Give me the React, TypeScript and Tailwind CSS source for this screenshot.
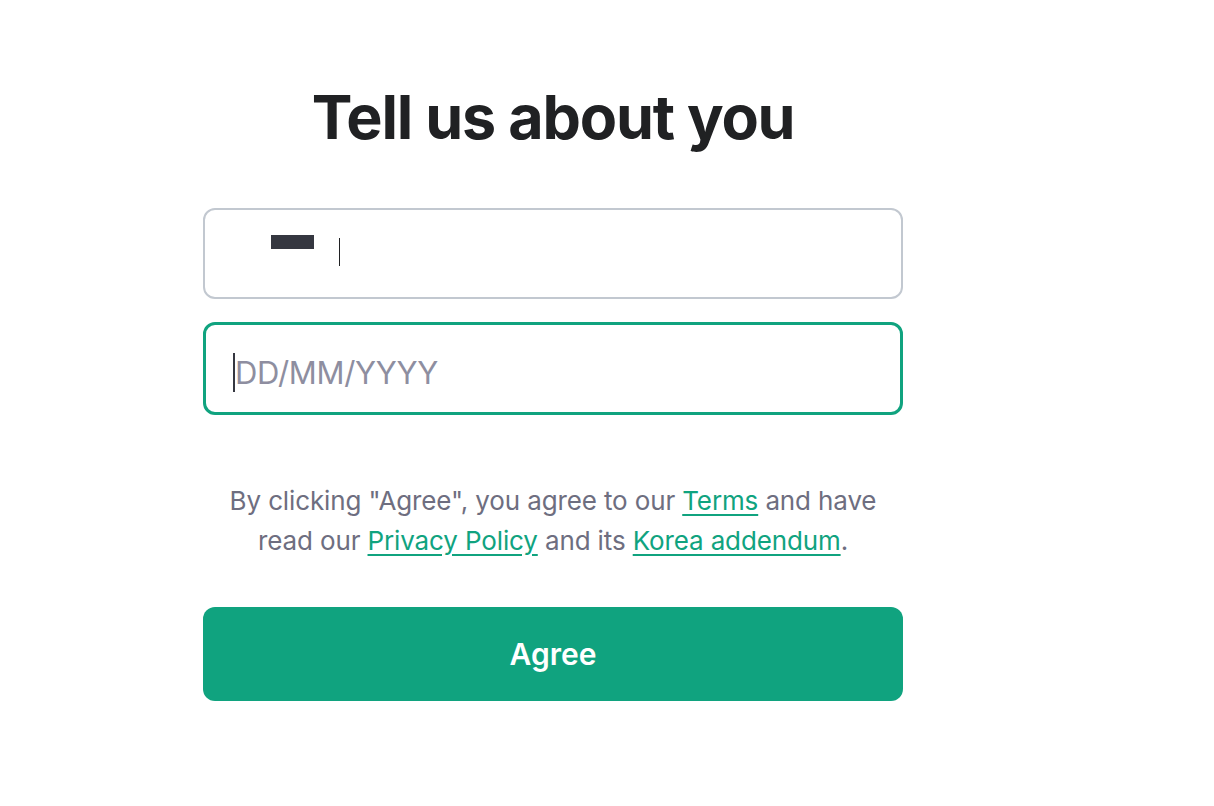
export default function App() {
	return (
		<div className="min-h-[806px] w-full bg-white font-['Inter','Liberation_Sans',sans-serif]">
			<div className="flex w-[700px] flex-col pt-[77px]" style={{ marginLeft: 203 }}>
				<h1 className="text-center text-[61px] font-bold leading-[80px] tracking-[-0.02em] text-[#202123]">
					Tell us about you
				</h1>

				{/* 名前 (redacted) */}
				<div className="mt-[51px] flex h-[91px] items-center rounded-[12px] border-2 border-[#c2c8d0] pl-[66px]">
					<div className="mt-[-24px] h-[14px] w-[43px] bg-[#353740]" />
					<div className="ml-[25px] mt-[-4px] h-[28px] w-px bg-[#202123]" />
				</div>

				{/* 生年月日 */}
				<div className="mt-[23px] flex h-[93px] items-center rounded-[12px] border-[3px] border-[#10a37f] pl-[27px]">
					<div className="mt-[8px] h-[39px] w-[2px] bg-[#353740]" />
					<span className="mt-[8px] text-[31px] leading-none tracking-[-0.01em] text-[#8e8ea0]">DD/MM/YYYY</span>
				</div>

				<p className="mx-auto mt-[66px] w-[680px] text-center text-[26px] leading-[40px] tracking-[-0.005em] text-[#6e6e80]">
					By clicking "Agree", you agree to our{" "}
					<a className="text-[#10a37f] underline underline-offset-[4px]">Terms</a> and have read our{" "}
					<a className="text-[#10a37f] underline underline-offset-[4px]">Privacy Policy</a> and its{" "}
					<a className="text-[#10a37f] underline underline-offset-[4px]">Korea addendum</a>.
				</p>

				<button className="mt-[46px] flex h-[94px] items-center justify-center rounded-[12px] bg-[#10a37f] text-[30px] font-semibold text-white">
					Agree
				</button>
			</div>
		</div>
	)
}
